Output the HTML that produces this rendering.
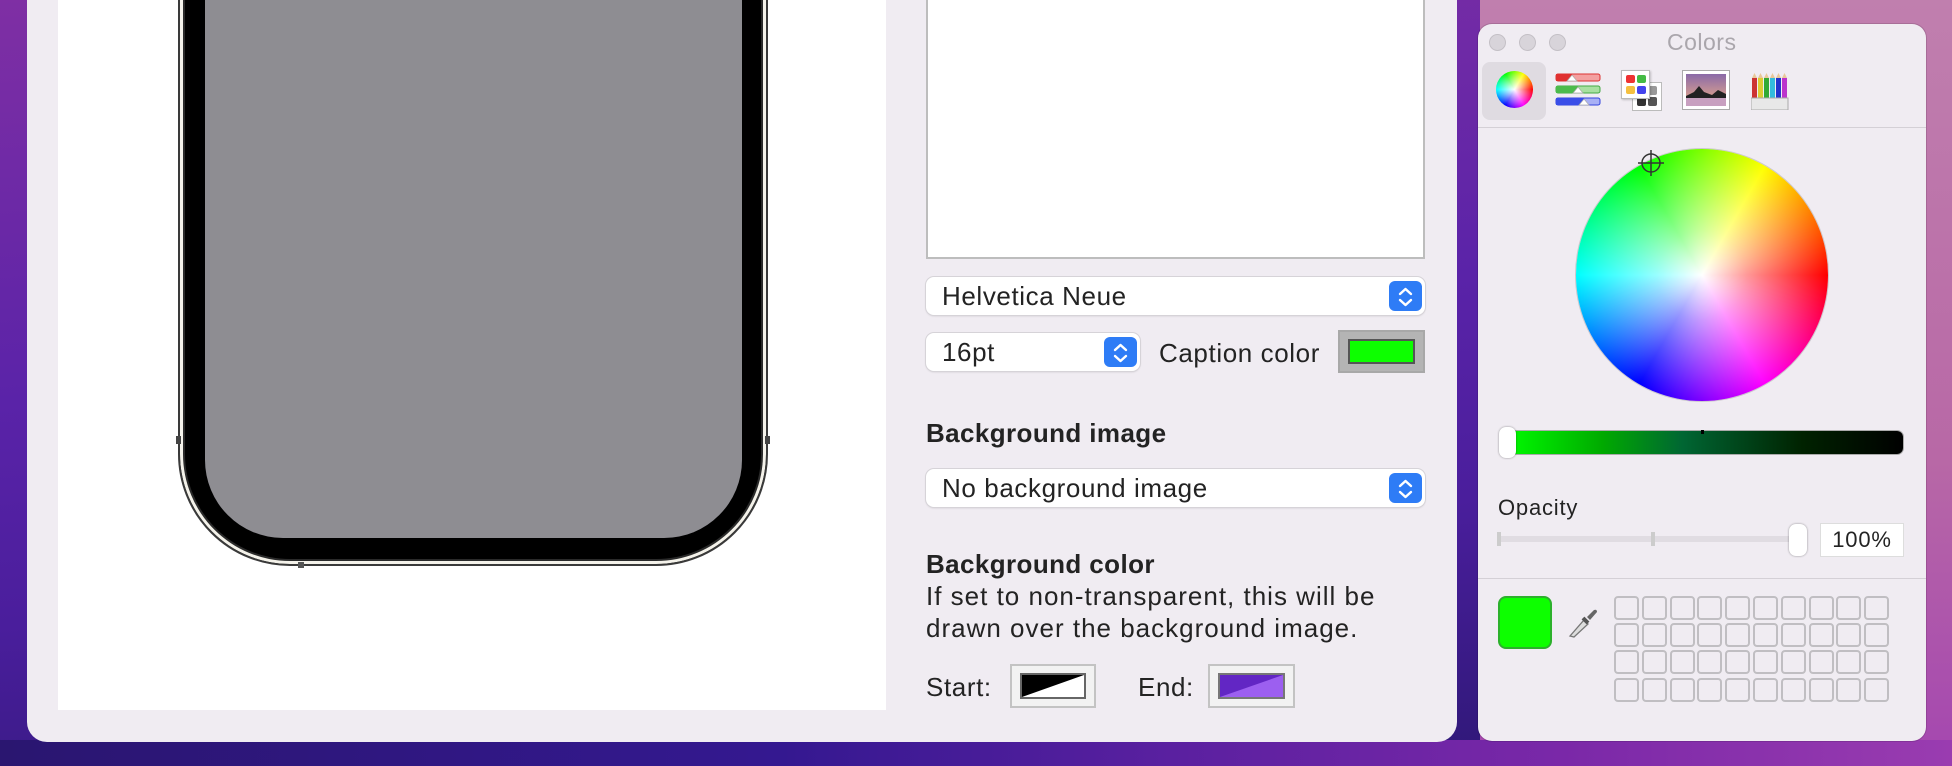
<!DOCTYPE html>
<html><head><meta charset="utf-8"><style>
*{margin:0;padding:0;box-sizing:border-box}
body{width:1952px;height:766px;overflow:hidden;position:relative;font-family:"Liberation Sans",Helvetica,Arial,sans-serif;color:#232323;
background:linear-gradient(180deg,#c07fae 0%,#b868a6 60%,#a446b0 100%);}
.bgL{position:absolute;left:0;top:0;width:1480px;height:766px;background:linear-gradient(175deg,#7f2fa4 0%,#5a23a8 45%,#4a1e9c 70%,#2f1878 100%)}
.bgB{position:absolute;left:0;top:740px;width:1952px;height:26px;background:linear-gradient(90deg,#2a1670 0%,#341890 40%,#5a20a0 60%,#7a28a8 80%,#9a3cb0 100%)}
.win{position:absolute;left:27px;top:-20px;width:1430px;height:762px;background:#f0ecf2;border-radius:20px}
.lp{position:absolute;left:58px;top:0;width:828px;height:710px;background:#fff}
.phone{position:absolute;left:178px;top:-200px;width:590px;height:766px;border:2px solid #3a3a3a;border-radius:0 0 112px 112px;background:#000;box-shadow:inset 0 0 0 3px #f4f2ea,inset 0 0 0 5px #2a2a2a}
.screen{position:absolute;left:205px;top:-200px;width:537px;height:738px;background:#8e8d92;border-radius:0 0 78px 78px}
.ta{position:absolute;left:926px;top:-4px;width:499px;height:263px;background:#fff;border:2px solid #bdbdbd}
.pop{position:absolute;background:#fff;border-radius:8px;box-shadow:0 0 0 1px #d6d3d8,0 1px 2px rgba(0,0,0,.15);font-size:26px;letter-spacing:.6px;line-height:1}
.pop span{position:absolute;left:16px;top:50%;transform:translateY(-50%)}
.step{position:absolute;right:3px;top:4px;width:33px;bottom:4px;background:#2e7cf6;border-radius:6px}
.step svg{position:absolute;left:8px;top:5px}
.lbl{position:absolute;font-size:26px;letter-spacing:.6px;line-height:1;white-space:nowrap}
.b{font-weight:bold;letter-spacing:.4px}
.well{position:absolute;background:#e4e4e4;border:2px solid #c3c3c3}
.cp{position:absolute;left:1478px;top:24px;width:448px;height:717px;background:#f0ecf2;border-radius:14px;box-shadow:0 0 0 1px rgba(0,0,0,.12)}
.tl{position:absolute;top:34px;width:17px;height:17px;border-radius:50%;background:#d8d4da;border:1px solid #c4c0c6}
.cell{position:absolute;width:25px;height:24px;border:2px solid #c0bec2;border-radius:4px}
</style></head><body>
<div class="bgL"></div><div class="bgB"></div>
<div class="win"></div>
<div class="lp"></div>
<div class="phone"></div>
<div style="position:absolute;left:176px;top:436px;width:5px;height:8px;background:#444"></div>
<div style="position:absolute;left:765px;top:436px;width:5px;height:8px;background:#444"></div>
<div style="position:absolute;left:298px;top:562px;width:6px;height:6px;background:#555"></div>
<div class="screen"></div>
<div class="ta"></div>

<div class="pop" style="left:926px;top:277px;width:499px;height:38px"><span>Helvetica Neue</span><div class="step"><svg width="17" height="22" viewBox="0 0 17 22"><path d="M3 8 L8.5 3 L14 8 M3 14 L8.5 19 L14 14" fill="none" stroke="#fff" stroke-width="2.4" stroke-linecap="round" stroke-linejoin="round"/></svg></div></div>
<div class="pop" style="left:926px;top:333px;width:214px;height:38px"><span>16pt</span><div class="step"><svg width="17" height="22" viewBox="0 0 17 22"><path d="M3 8 L8.5 3 L14 8 M3 14 L8.5 19 L14 14" fill="none" stroke="#fff" stroke-width="2.4" stroke-linecap="round" stroke-linejoin="round"/></svg></div></div>
<div class="lbl" style="left:1159px;top:340px">Caption color</div>
<div class="well" style="left:1338px;top:330px;width:87px;height:43px;background:#b4b4b4;border-color:#a8a8a8"><div style="position:absolute;left:8px;top:7px;width:67px;height:25px;background:#0dff00;border:2px solid #555"></div></div>

<div class="lbl b" style="left:926px;top:420px">Background image</div>
<div class="pop" style="left:926px;top:469px;width:499px;height:38px"><span>No background image</span><div class="step"><svg width="17" height="22" viewBox="0 0 17 22"><path d="M3 8 L8.5 3 L14 8 M3 14 L8.5 19 L14 14" fill="none" stroke="#fff" stroke-width="2.4" stroke-linecap="round" stroke-linejoin="round"/></svg></div></div>

<div class="lbl b" style="left:926px;top:551px">Background color</div>
<div class="lbl" style="left:926px;top:583px;letter-spacing:1px">If set to non-transparent, this will be</div>
<div class="lbl" style="left:926px;top:615px;letter-spacing:1px">drawn over the background image.</div>
<div class="lbl" style="left:926px;top:674px">Start:</div>
<div class="well" style="left:1010px;top:664px;width:86px;height:44px;background:#f2f2f2"><svg style="position:absolute;left:8px;top:7px" width="66" height="26"><rect x="1" y="1" width="64" height="24" fill="#fff" stroke="#666" stroke-width="2"/><polygon points="2,2 64,2 2,24" fill="#000"/></svg></div>
<div class="lbl" style="left:1138px;top:674px">End:</div>
<div class="well" style="left:1208px;top:664px;width:87px;height:44px;background:#f2f2f2"><svg style="position:absolute;left:8px;top:7px" width="67" height="26"><rect x="1" y="1" width="65" height="24" fill="#9c5ff0" stroke="#777" stroke-width="2"/><polygon points="2,2 65,2 2,24" fill="#6226c4"/></svg></div>

<!-- Colors panel -->
<div class="cp"></div>
<div class="tl" style="left:1489px"></div><div class="tl" style="left:1519px"></div><div class="tl" style="left:1549px"></div>
<div class="lbl" style="left:1667px;top:31px;font-size:23px;letter-spacing:.5px;color:#aaa6ac">Colors</div>
<div style="position:absolute;left:1482px;top:62px;width:64px;height:58px;background:#dfdbe1;border-radius:8px"></div>
<div style="position:absolute;left:1496px;top:71px;width:37px;height:37px;border-radius:50%;background:radial-gradient(circle,#fff 0%,rgba(255,255,255,0) 70%),conic-gradient(from 90deg,#f00,#f0f,#00f,#0ff,#0f0,#ff0,#f00)"></div>
<svg style="position:absolute;left:1555px;top:72px" width="48" height="38">
<rect x="1" y="2" width="44" height="7" rx="2" fill="#f3a0a0" stroke="#d33" /><rect x="1" y="2" width="16" height="7" fill="#e03030"/>
<rect x="1" y="14" width="44" height="7" rx="2" fill="#a8e0a0" stroke="#4a4"/><rect x="1" y="14" width="22" height="7" fill="#4cbb4c"/>
<rect x="1" y="26" width="44" height="7" rx="2" fill="#a8b0f5" stroke="#34d"/><rect x="1" y="26" width="28" height="7" fill="#3a4ee8"/>
<path d="M12 9 l5-6 5 6z M18 21 l5-6 5 6z M24 33 l5-6 5 6z" fill="#fff" stroke="#aaa" stroke-width=".7"/></svg>
<div style="position:absolute;left:1632px;top:82px;width:30px;height:29px;background:#fff;border:1px solid #bbb"><div style="position:absolute;left:4px;top:14px;width:9px;height:9px;background:#333;border-radius:2px"></div><div style="position:absolute;left:15px;top:14px;width:9px;height:9px;background:#555;border-radius:2px"></div><div style="position:absolute;left:15px;top:3px;width:9px;height:9px;background:#999;border-radius:2px"></div></div>
<div style="position:absolute;left:1621px;top:70px;width:29px;height:29px;background:#fff;border:1px solid #bbb;box-shadow:1px 1px 2px rgba(0,0,0,.2)"><div style="position:absolute;left:4px;top:4px;width:9px;height:8px;background:#e33;border-radius:2px"></div><div style="position:absolute;left:15px;top:4px;width:9px;height:8px;background:#4b4;border-radius:2px"></div><div style="position:absolute;left:4px;top:15px;width:9px;height:8px;background:#f5c040;border-radius:2px"></div><div style="position:absolute;left:15px;top:15px;width:9px;height:8px;background:#44e;border-radius:2px"></div></div>
<svg style="position:absolute;left:1682px;top:70px" width="48" height="40"><rect x=".5" y=".5" width="47" height="39" fill="#fff" stroke="#aaa"/><defs><linearGradient id="sk" x1="0" y1="0" x2="0" y2="1"><stop offset="0" stop-color="#8a6aa8"/><stop offset="1" stop-color="#f2b088"/></linearGradient></defs><rect x="4" y="4" width="40" height="32" fill="url(#sk)"/><path d="M4 26 L12 22 L17 16 L22 22 L30 25 L36 20 L44 24 L44 28 L4 28z" fill="#222"/><rect x="4" y="28" width="40" height="8" fill="#c8a0c0"/></svg>
<svg style="position:absolute;left:1751px;top:72px" width="38" height="38"><rect x="1" y="6" width="5" height="22" fill="#c33"/><rect x="7" y="6" width="5" height="22" fill="#dc3"/><rect x="13" y="6" width="5" height="22" fill="#3a3"/><rect x="19" y="6" width="5" height="22" fill="#3bd"/><rect x="25" y="6" width="5" height="22" fill="#23c"/><rect x="31" y="6" width="5" height="22" fill="#b3c"/><path d="M1 6l2.5-5 2.5 5M7 6l2.5-5 2.5 5M13 6l2.5-5 2.5 5M19 6l2.5-5 2.5 5M25 6l2.5-5 2.5 5M31 6l2.5-5 2.5 5" fill="#e8c89a"/><rect x="0" y="26" width="37" height="12" fill="#e8e8e8" stroke="#aaa"/></svg>
<div style="position:absolute;left:1478px;top:127px;width:448px;height:1px;background:#d4d0d6"></div>

<div style="position:absolute;left:1576px;top:149px;width:252px;height:252px;border-radius:50%;background:radial-gradient(circle,#fff 0%,rgba(255,255,255,.6) 25%,rgba(255,255,255,0) 70%),conic-gradient(from 90deg,#f00,#f0f,#00f,#0ff,#0f0,#ff0,#f00);box-shadow:0 0 0 1px rgba(0,0,0,.15)"></div>
<svg style="position:absolute;left:1636px;top:148px" width="30" height="30"><circle cx="15" cy="15" r="9" fill="none" stroke="#333" stroke-width="1.5"/><path d="M15 2V28M2 15H28" stroke="#333" stroke-width="1.5"/></svg>

<div style="position:absolute;left:1502px;top:431px;width:401px;height:23px;border-radius:6px;background:linear-gradient(90deg,#0f0,#0a0 25%,#063 45%,#020 75%,#000);box-shadow:0 0 0 1px #aaa"></div>
<div style="position:absolute;left:1701px;top:430px;width:3px;height:4px;background:#000"></div>
<div style="position:absolute;left:1499px;top:427px;width:17px;height:31px;border-radius:7px;background:#fff;box-shadow:0 0 2px rgba(0,0,0,.4)"></div>

<div class="lbl" style="left:1498px;top:497px;font-size:22px;letter-spacing:.8px">Opacity</div>
<div style="position:absolute;left:1498px;top:536px;width:300px;height:6px;background:#e0dce2;border-radius:3px"></div>
<div style="position:absolute;left:1497px;top:532px;width:4px;height:14px;background:#ccc"></div>
<div style="position:absolute;left:1651px;top:532px;width:4px;height:14px;background:#ccc"></div>
<div style="position:absolute;left:1789px;top:524px;width:18px;height:32px;border-radius:7px;background:#fff;box-shadow:0 0 2px rgba(0,0,0,.4)"></div>
<div style="position:absolute;left:1820px;top:523px;width:84px;height:34px;background:#fff;border:1px solid #ddd;font-size:22px;letter-spacing:.8px;text-align:center;line-height:32px">100%</div>
<div style="position:absolute;left:1478px;top:578px;width:448px;height:1px;background:#d4d0d6"></div>

<div style="position:absolute;left:1498px;top:596px;width:54px;height:53px;background:#0dff00;border:2px solid #2cb02c;border-radius:8px"></div>
<svg style="position:absolute;left:1566px;top:604px" width="36" height="36" viewBox="0 0 36 36"><path d="M4 32 L18 16 L22 20 L8 33 Z" fill="#ddd" stroke="#777" stroke-width="1.3"/><path d="M17 14 L22 19" stroke="#555" stroke-width="4"/><path d="M21 13 L28 6 Q31 5 31 8 L24 16Z" fill="#666"/></svg>
<div id="g"></div>
<script>
var h='';for(var r=0;r<4;r++)for(var c=0;c<10;c++){h+='<div class="cell" style="left:'+(1614+c*27.8)+'px;top:'+(596+r*27.2)+'px"></div>'}
document.getElementById('g').innerHTML=h;
</script>
</body></html>
